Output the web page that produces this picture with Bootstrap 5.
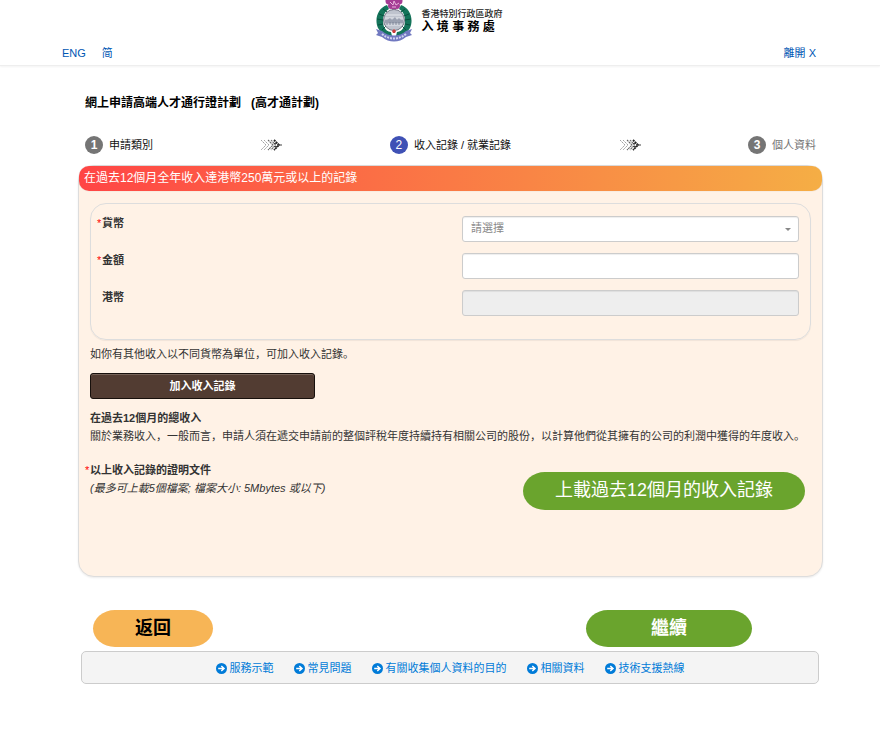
<!DOCTYPE html>
<html lang="zh">
<head>
<meta charset="utf-8">
<meta name="viewport" content="width=device-width, initial-scale=1">
<title>網上申請高端人才通行證計劃</title>
<link href="https://cdn.jsdelivr.net/npm/bootstrap@5.3.0/dist/css/bootstrap.min.css" rel="stylesheet">
<style>
  body { font-family: "Liberation Sans", "Noto Sans CJK SC", sans-serif; font-size: 11px; line-height: 18px; color: #333; background: #fff; }
  .site-head { border-bottom: 1px solid #eee; box-shadow: 0 1px 2px rgba(0,0,0,.05); padding: 0 64px 3px 62px; }
  .site-head a { color: #0056b3; }
  .brand-line1 { font-size: 9px; line-height: 12px; color: #222; font-weight: 500; }
  .brand-line2 { font-size: 12px; line-height: 14px; color: #000; font-weight: 700; }
  .page-main { padding: 27px 57px 0 78px; }
  .page-title { font-size: 12px; line-height: 20px; font-weight: 700; color: #000; margin: 0 0 23px; padding-left: 7px; white-space: pre-wrap; }
  .steps { padding: 0 7px; margin-bottom: 11px; }
  .step-dot { width: 18px; height: 18px; margin-right: 6px; background: #757575; color: #fff; font-size: 12px; font-weight: 700; }
  .step-now .step-dot { background: #3f51b5; font-weight: 400; }
  .step-now, .step-done { color: #111; }
  .step-next { color: #757575; }
  .panel { background: #fff2e6; border: 1px solid #ddd; border-radius: 16px; min-height: 412px; box-shadow: 0 1px 2px rgba(0,0,0,.08); }
  .panel-head { font-size: 12px; line-height: 25px; color: #fff; background: linear-gradient(90deg, #ff4545, #f5ae45); border-radius: 10px; margin: 0; padding: 0 5px; box-shadow: 0 0 1px #bbb; font-weight: 400; }
  .panel-body { padding: 12px 11px 12px; }
  .income-box { border: 1px solid #ddd; border-radius: 16px; padding: 12px 11px 23px 6px; box-shadow: 0 1px 1px rgba(0,0,0,.06); }
  .income-row + .income-row { margin-top: 11px; }
  .income-row label { display: block; line-height: 14px; font-weight: 700; padding-left: 5px; }
  .income-ctl { width: 48%; }
  .req { position: relative; }
  .req::before { content: "*"; color: #f00; position: absolute; left: 0; font-weight: 400; }
  .field { display: block; height: 26px; border: 1px solid #ccc; border-radius: 3px; background: #fff; font-size: 11px; line-height: 18px; padding: 2px 8px 4px; color: #888; width: 100%; box-shadow: inset 0 1px 1px rgba(0,0,0,.07); }
  .field:disabled { background: #eee; }
  select.field { appearance: none; }
  .select-wrap { position: relative; }
  .select-wrap svg { position: absolute; right: 8px; top: 12px; pointer-events: none; }
  .hint { margin: 5px 0 10px; }
  .btn-add { width: 225px; height: 26px; margin-bottom: 10px; background: #523c32; border: 1px solid #17100c; border-radius: 3px; color: #fff; font-size: 11px; font-weight: 700; line-height: 18px; padding: 0; box-shadow: inset 0 1px 0 #766359; }
  .btn-add:hover { background: #3f2d25; color: #fff; }
  .proof-label { margin-left: -5px; padding-left: 5px; }
  .btn-round { border: 0; border-radius: 22px / 50%; font-size: 18px; line-height: 27px; padding: 5px 32px; }
  .btn-upload { margin: 11px 6px 0 0; padding-bottom: 6px; }
  .btn-back { padding-left: 42px; padding-right: 42px; }
  .btn-next { padding-left: 65px; padding-right: 65px; }
  .btn-green, .btn-green:hover { background: #6aa42d; color: #fff; }
  .btn-amber, .btn-amber:hover { background: #f7b556; color: #000; }
  .action-row { padding: 33px 71px 4px 15px; }
  .foot-bar { background: #f4f4f4; border: 1px solid #ccc; border-radius: 5px; margin: 0 4px 0 3px; padding: 7px 10px 6px; gap: 20px; }
  .foot-bar a { color: #007bd8; gap: 3px; }
</style>
</head>
<body>
<svg width="0" height="0" class="d-none" aria-hidden="true">
  <symbol id="go" viewBox="0 0 11 11"><circle cx="5.5" cy="5.5" r="5.5" fill="#007bd8"/><path d="M2.2 5.5h5M5.3 3l2.7 2.5L5.3 8" fill="none" stroke="#fff" stroke-width="1.5"/></symbol>
  <symbol id="chev" viewBox="0 0 22 12"><g fill="none" stroke-dasharray="2 .6"><path d="M1 1l5 5-5 5M4 1l5 5-5 5" stroke="#999" stroke-width=".9"/><path d="M8 1l5 5-5 5M11 1l4.500 5-4.500 5" stroke="#666" stroke-width="1.100"/><path d="M14 1l5 5-5 5" stroke="#222" stroke-width="1.800"/></g><path d="M14 4.500h3M14 7.500h3M17 6h5" stroke="#444" stroke-width="1.200"/></symbol>
</svg>

<header class="site-head">
  <div class="d-flex justify-content-center align-items-start">
    <svg width="38" height="44" viewBox="0 0 38 44" role="img" aria-label="入境事務處徽章">
      <g fill="#a43b94"><circle cx="14" cy="1" r="3.500"/><circle cx="24" cy="1" r="3.500"/><circle cx="16" cy="6" r="3"/><circle cx="22" cy="6" r="3"/><path d="M17 0h4v10h-4z"/></g>
      <path d="M15 2l3 3 1-4 2 4 3-2M17 7h4" stroke="#e9b5dd" fill="none"/>
      <path d="M12 5C3 8-1 19 3 28c3 5 8 8 14 8l-1-4C9 31 8 25 8 20c0-4 2-9 6-11zM26 5c9 3 13 14 9 23-3 5-8 8-14 8l1-4c7-1 8-7 8-12 0-4-2-9-6-11z" fill="#14745a"/>
      <path d="M4 14l5 2M2 19l6 1M3 25l5-1M7 30l4-4M34 14l-5 2M36 19l-6 1M35 25l-5-1M31 30l-4-4M8 9l4 3M30 9l-4 3" stroke="#07503d"/>
      <circle cx="19" cy="20" r="10.500" fill="#bfc3ce" stroke="#777b89"/>
      <path d="M11 15h16M10 18h18M11 25h16" stroke="#e6e8ee"/>
      <path d="M10 23h18v-3H10zM12 20l3-2 2 2 3-3 2 3 2-2 2 2" fill="#9aa0b0"/>
      <path d="M12 23v2M15 22v3M18 22v3M21 22v3M24 22v3" stroke="#737b90" stroke-width=".8"/>
      <path d="M1 29l6 2c7 6 17 6 24 0l6-2-2 4 2 2-6 2c-7 6-17 6-24 0l-6-2 2-2z" fill="#7078c0"/>
      <path d="M7 34c7 6 17 6 24 0" fill="none" stroke="#cfd2ef" stroke-width="2" stroke-dasharray="2 1"/>
      <path d="M17 31l2-2 2 2-1 2h-2z" fill="#c93b3b"/>
    </svg>
    <div class="ms-2 pt-1">
      <div class="pt-1 brand-line1">香港特別行政區政府</div>
      <div class="brand-line2">入 境 事 務 處</div>
    </div>
  </div>
  <nav class="d-flex justify-content-between" aria-label="語言">
    <div class="d-flex gap-3">
      <a class="text-decoration-none" href="#">ENG</a>
      <a class="text-decoration-none" href="#">简</a>
    </div>
    <a class="text-decoration-none" href="#">離開 X</a>
  </nav>
</header>

<main class="page-main">
  <h1 class="page-title">網上申請高端人才通行證計劃   (高才通計劃)</h1>

  <div class="steps d-flex justify-content-between align-items-center">
    <div class="step-done d-flex align-items-center"><span class="step-dot rounded-circle d-flex align-items-center justify-content-center">1</span>申請類別</div>
    <svg width="22" height="12" aria-hidden="true"><use href="#chev"/></svg>
    <div class="step-now d-flex align-items-center"><span class="step-dot rounded-circle d-flex align-items-center justify-content-center">2</span>收入記錄 / 就業記錄</div>
    <svg width="22" height="12" aria-hidden="true"><use href="#chev"/></svg>
    <div class="step-next d-flex align-items-center"><span class="step-dot rounded-circle d-flex align-items-center justify-content-center">3</span>個人資料</div>
  </div>

  <section class="panel">
    <h2 class="panel-head">在過去12個月全年收入達港幣250萬元或以上的記錄</h2>
    <div class="panel-body">
      <div class="income-box">
        <div class="income-row d-flex justify-content-between align-items-start">
          <label class="req" for="currency">貨幣</label>
          <div class="income-ctl select-wrap">
            <select class="field" id="currency"><option>請選擇</option></select>
            <svg width="6" height="4" viewBox="0 0 6 4" aria-hidden="true"><path d="M0 0h6L3 3z" fill="#888"/></svg>
          </div>
        </div>
        <div class="income-row d-flex justify-content-between align-items-start">
          <label class="req" for="amount">金額</label>
          <div class="income-ctl"><input class="field" id="amount" type="text"></div>
        </div>
        <div class="income-row d-flex justify-content-between align-items-start">
          <label for="hkd">港幣</label>
          <div class="income-ctl"><input class="field" id="hkd" type="text" disabled></div>
        </div>
      </div>

      <p class="hint">如你有其他收入以不同貨幣為單位，可加入收入記錄。</p>
      <button class="btn btn-add d-block" type="button">加入收入記錄</button>
      <div class="fw-bold">在過去12個月的總收入</div>
      <p class="mb-3">關於業務收入，一般而言，申請人須在遞交申請前的整個評稅年度持續持有相關公司的股份，以計算他們從其擁有的公司的利潤中獲得的年度收入。</p>

      <div class="d-flex justify-content-between align-items-start">
        <div>
          <div class="req proof-label fw-bold">以上收入記錄的證明文件</div>
          <div class="fst-italic">(最多可上載5個檔案; 檔案大小: 5Mbytes 或以下)</div>
        </div>
        <button class="btn btn-round btn-green btn-upload" type="button">上載過去12個月的收入記錄</button>
      </div>
    </div>
  </section>

  <div class="action-row d-flex justify-content-between">
    <button class="btn btn-round btn-amber btn-back fw-bold" type="button">返回</button>
    <button class="btn btn-round btn-green btn-next fw-bold" type="button">繼續</button>
  </div>

  <footer class="foot-bar d-flex flex-wrap justify-content-center">
    <a class="d-flex align-items-center text-decoration-none" href="#"><svg width="11" height="11" aria-hidden="true"><use href="#go"/></svg>服務示範</a>
    <a class="d-flex align-items-center text-decoration-none" href="#"><svg width="11" height="11" aria-hidden="true"><use href="#go"/></svg>常見問題</a>
    <a class="d-flex align-items-center text-decoration-none" href="#"><svg width="11" height="11" aria-hidden="true"><use href="#go"/></svg>有關收集個人資料的目的</a>
    <a class="d-flex align-items-center text-decoration-none" href="#"><svg width="11" height="11" aria-hidden="true"><use href="#go"/></svg>相關資料</a>
    <a class="d-flex align-items-center text-decoration-none" href="#"><svg width="11" height="11" aria-hidden="true"><use href="#go"/></svg>技術支援熱線</a>
  </footer>
</main>
<script src="https://cdn.jsdelivr.net/npm/bootstrap@5.3.0/dist/js/bootstrap.bundle.min.js"></script>
</body>
</html>
